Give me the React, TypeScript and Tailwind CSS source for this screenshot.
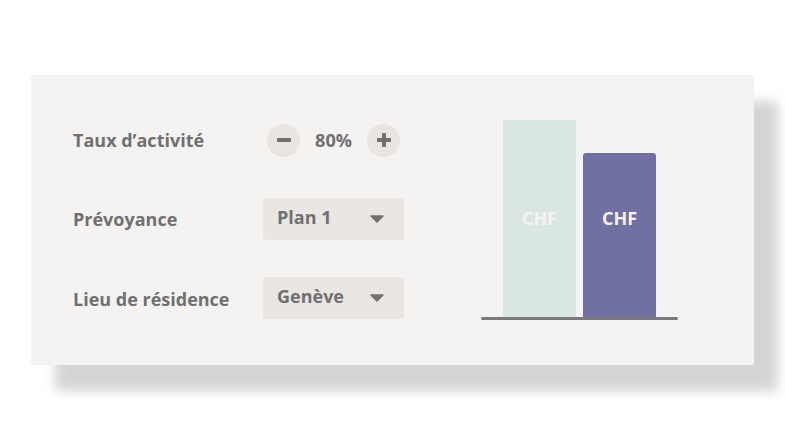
import { useState } from "react";

const options = ["Plan 1", "Genève"];

function Caret() {
  return (
    <svg width="14" height="8" viewBox="0 0 14 8" className="shrink-0">
      <path d="M1 1 L13 1 L7 7 Z" fill="#717171" stroke="#717171" strokeWidth="1.5" strokeLinejoin="round" />
    </svg>
  );
}

function Select({ value }: { value: string }) {
  return (
    <div className="flex h-[42px] w-[141px] items-center justify-between rounded-[3px] bg-[#e9e6e3] pl-[14px] pr-[20px]">
      <span className="pb-[3px]">{value}</span>
      <Caret />
    </div>
  );
}

function RoundButton({ plus }: { plus?: boolean }) {
  return (
    <button className="flex h-[33px] w-[33px] items-center justify-center rounded-full bg-[#e8e5e2]">
      <svg width="16" height="16" viewBox="0 0 16 16">
        <rect x="1" y="6" width="14" height="4" rx="1" fill="#717171" />
        {plus && <rect x="6" y="1" width="4" height="14" rx="1" fill="#717171" />}
      </svg>
    </button>
  );
}

export default function App() {
  const [rate] = useState(80);

  return (
    <div className="h-[441px] w-[785px] bg-white pt-[75px] pl-[31px] font-['Open_Sans',sans-serif] text-[18px] font-bold text-[#707070]">
      <div className="flex h-[290px] w-[723px] rounded-[2px] bg-[#f4f3f1] pl-[42px] pt-[44px] shadow-[24px_26px_12px_rgba(0,0,0,0.17)]">
        {/* left: controls */}
        <div className="flex flex-col gap-[37px]">
          <div className="flex h-[42px] items-center">
            <span className="w-[190px]">Taux d’activité</span>
            <div className="ml-[4px] flex items-center">
              <RoundButton />
              <span className="w-[67px] text-center">{rate}%</span>
              <RoundButton plus />
            </div>
          </div>
          <div className="flex h-[42px] items-center">
            <span className="w-[190px]">Prévoyance</span>
            <Select value={options[0]} />
          </div>
          <div className="flex h-[42px] items-center">
            <span className="w-[190px] pt-[2px]">Lieu de résidence</span>
            <Select value={options[1]} />
          </div>
        </div>

        {/* right: chart */}
        <div className="ml-[77px] flex w-[197px] flex-col pt-[1px]">
          <div className="flex h-[197px] items-end gap-[7px] pl-[22px]">
            <div className="flex h-[197px] w-[73px] items-center justify-center rounded-t-[3px] bg-[#d9e6e3] text-[#f4f3f1]">
              CHF
            </div>
            <div className="flex h-[164px] w-[73px] items-center justify-center rounded-t-[3px] bg-[#7170a2] pb-[33px] text-[#f4f3f1]">
              CHF
            </div>
          </div>
          <div className="h-[3px] w-[197px] rounded-full bg-[#7a7a7a]" />
        </div>
      </div>
    </div>
  );
}
